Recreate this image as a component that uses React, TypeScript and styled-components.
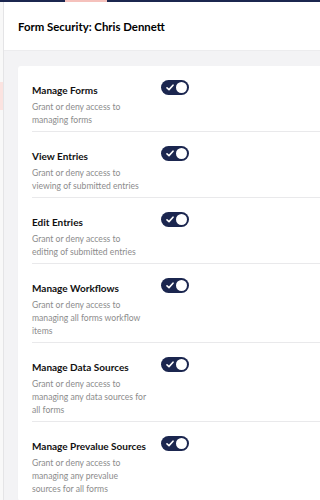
import React, { FC } from "react";
import styled, { createGlobalStyle } from "styled-components";

const permissions = [
  { title: "Manage Forms", text: "Grant or deny access to managing forms" },
  { title: "View Entries", text: "Grant or deny access to viewing of submitted entries" },
  { title: "Edit Entries", text: "Grant or deny access to editing of submitted entries" },
  { title: "Manage Workflows", text: "Grant or deny access to managing all forms workflow items" },
  { title: "Manage Data Sources", text: "Grant or deny access to managing any data sources for all forms" },
  { title: "Manage Prevalue Sources", text: "Grant or deny access to managing any prevalue sources for all forms" },
];

const Toggle: FC<{ on: boolean }> = ({ on }) => (
  <Switch $on={on}>
    <svg width="8" height="7" viewBox="0 0 8 7">
      <path d="M1 3.8 L3 5.6 L7 1.2" fill="none" stroke="#fff" strokeWidth="1.6" strokeLinecap="round" strokeLinejoin="round" />
    </svg>
    <Knob />
  </Switch>
);

export default function App() {
  return (
    <>
      <GlobalStyle />
      <Page>
        <TopBar>
          <TabMark />
        </TopBar>
        <Body>
          <Rail>
            <RailMark />
          </Rail>
          <Main>
            <Header>Form Security: Chris Dennett</Header>
            <Content>
              <Card>
                {permissions.map((p) => (
                  <Row key={p.title}>
                    <Label>
                      <Title>{p.title}</Title>
                      <Description>{p.text}</Description>
                    </Label>
                    <Toggle on />
                  </Row>
                ))}
              </Card>
            </Content>
          </Main>
        </Body>
      </Page>
    </>
  );
}

const GlobalStyle = createGlobalStyle`
  html, body {
    margin: 0;
    padding: 0;
    overflow: hidden;
    background: #f3f3f5;
  }
  body {
    font-family: Lato, "Open Sans", sans-serif;
    -webkit-font-smoothing: antialiased;
  }
`;

const Page = styled.div`
  display: flex;
  flex-direction: column;
  width: 100%;
  height: 500px;
  overflow: hidden;
`;

const TopBar = styled.div`
  display: flex;
  flex: none;
  height: 2px;
  padding-left: 65px;
  background: #1b264f;
`;

const TabMark = styled.div`
  width: 42px;
  background: #f5c1bc;
`;

const Body = styled.div`
  display: flex;
  flex: 1;
  min-height: 0;
`;

const Rail = styled.div`
  display: flex;
  flex-direction: column;
  flex: none;
  width: 3px;
  padding-top: 80px;
  background: #f8f8f8;
  border-right: 1px solid #e4e4e6;
`;

const RailMark = styled.div`
  height: 28px;
  background: #fbe3e0;
`;

const Main = styled.div`
  display: flex;
  flex-direction: column;
  flex: 1;
  min-width: 0;
`;

const Header = styled.div`
  flex: none;
  height: 48px;
  display: flex;
  align-items: center;
  padding-left: 14px;
  background: #fff;
  border-bottom: 1px solid #ececee;
  color: #000;
  font-size: 11.4px;
  font-weight: 700;
`;

const Content = styled.div`
  flex: 1;
  padding: 15px 0 0 14px;
  background: #f3f3f5;
`;

const Card = styled.div`
  padding-left: 14px;
  background: #fff;
  border-radius: 3px 0 0 3px;
  box-shadow: 0 1px 1px rgba(0, 0, 0, 0.05);
`;

const Row = styled.div`
  display: flex;
  align-items: flex-start;
  padding: 14px 0 4px;
  border-bottom: 1px solid #e9e9eb;
`;

const Label = styled.div`
  width: 116px;
  flex: none;
  padding-top: 3px;
`;

const Title = styled.div`
  color: #111;
  font-size: 10px;
  font-weight: 700;
  line-height: 15px;
  margin-bottom: 3px;
  white-space: nowrap;
`;

const Description = styled.div`
  color: #8c8c8c;
  font-size: 8.6px;
  line-height: 13px;
`;

const Switch = styled.div<{ $on: boolean }>`
  display: flex;
  align-items: center;
  justify-content: space-between;
  flex: none;
  box-sizing: border-box;
  width: 28px;
  height: 15px;
  margin-left: 13px;
  padding: 0 2px 0 5px;
  border-radius: 8px;
  background: ${(p) => (p.$on ? "#1b264f" : "#c4c4c4")};
`;

const Knob = styled.div`
  width: 11px;
  height: 11px;
  border-radius: 50%;
  background: #fff;
`;
